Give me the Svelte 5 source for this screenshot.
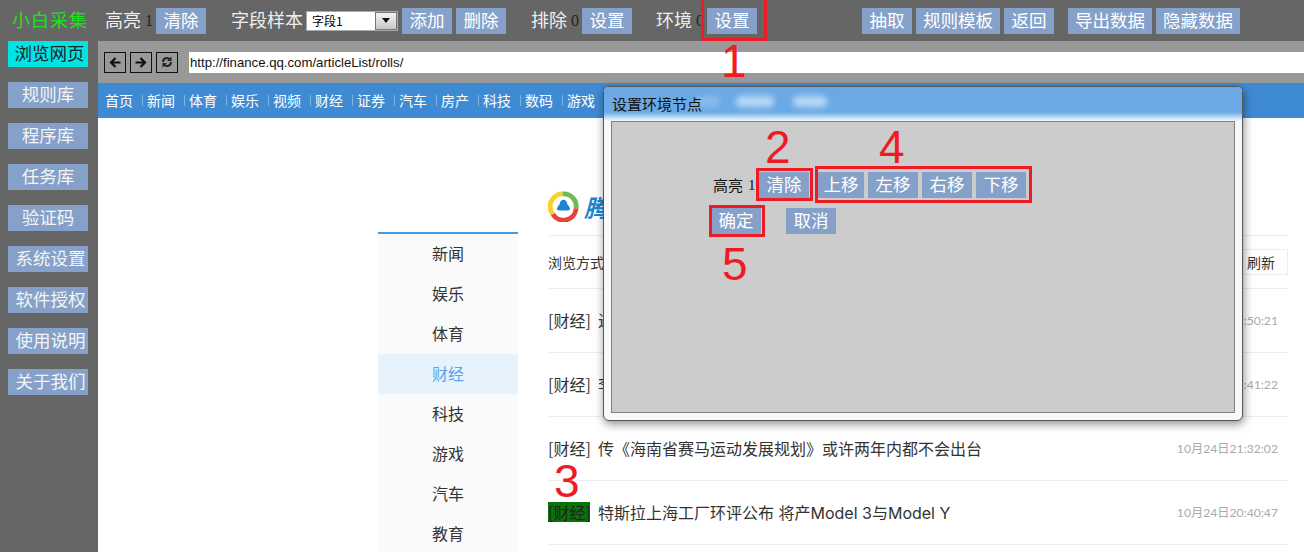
<script>
  const sideItems = ['浏览网页', '规则库', '程序库', '任务库', '验证码', '系统设置', '软件授权', '使用说明', '关于我们'];
  const navItems = ['首页', '新闻', '体育', '娱乐', '视频', '财经', '证券', '汽车', '房产', '科技', '数码', '游戏'];
  const channels = ['新闻', '娱乐', '体育', '财经', '科技', '游戏', '汽车', '教育'];
  const rows = [
    { title: '进', time: '10月24日21:50:21' },
    { title: '李', time: '10月24日21:41:22' },
    { title: '传《海南省赛马运动发展规划》或许两年内都不会出台', time: '10月24日21:32:02' },
    { title: '特斯拉上海工厂环评公布 将产Model 3与Model Y', time: '10月24日20:40:47', mark: true }
  ];
  const moves = ['上移', '左移', '右移', '下移'];
</script>

<div class="screen">
  <header class="topbar">
    <span class="brand">小白采集</span>
    <span class="label hl">高亮</span><span class="num">1</span>
    <button class="btn first">清除</button>
    <span class="label sample">字段样本</span>
    <div class="select"><span>字段1</span><i><b></b></i></div>
    <button class="btn">添加</button>
    <button class="btn">删除</button>
    <span class="label excl">排除</span><span class="num">0</span>
    <button class="btn">设置</button>
    <span class="label env">环境</span><span class="num">0</span>
    <button class="btn envset">设置</button>
    <button class="btn extract">抽取</button>
    <button class="btn wide">规则模板</button>
    <button class="btn">返回</button>
    <button class="btn wide export">导出数据</button>
    <button class="btn wide">隐藏数据</button>
  </header>

  <div class="main">
    <aside class="side">
      {#each sideItems as item, i}
        <button class="sidebtn" class:on={i === 0} class:four={item.length === 4}>{item}</button>
      {/each}
    </aside>

    <section class="browser">
      <div class="toolbar">
        <button class="nav" aria-label="back">
          <svg width="12" height="11" viewBox="0 0 12 11"><path d="M11.500 5.500H3M6.500 1 2 5.500 6.500 10" fill="none" stroke="#111" stroke-width="2.200"/></svg>
        </button>
        <button class="nav" aria-label="forward">
          <svg width="12" height="11" viewBox="0 0 12 11"><path d="M.5 5.500H9M5.500 1 10 5.500 5.500 10" fill="none" stroke="#111" stroke-width="2.200"/></svg>
        </button>
        <button class="nav" aria-label="refresh">
          <svg width="12" height="12" viewBox="0 0 12 12"><path d="M2 6a4 4 0 0 1 7-2.600M10 6a4 4 0 0 1-7 2.600" fill="none" stroke="#222" stroke-width="2"/><path d="M10.500.5V5H6ZM1.500 11.500V7H6Z" fill="#222"/></svg>
        </button>
        <div class="url">http://finance.qq.com/articleList/rolls/</div>
      </div>

      <nav class="sitenav">
        {#each navItems as item}
          <a href="#top">{item}</a>
        {/each}
      </nav>

      <div class="page">
        <ul class="channels">
          {#each channels as ch}
            <li class:cur={ch === '财经'}>{ch}</li>
          {/each}
        </ul>
        <div class="list">
          <div class="logo">
            <svg width="31" height="31" viewBox="0 0 32 32">
              <path d="M5 24A13 13 0 0 1 15 3" fill="none" stroke="#f5d327" stroke-width="5"/>
              <path d="M15 3A13 13 0 0 1 29 18" fill="none" stroke="#6fbb55" stroke-width="5"/>
              <path d="M29 18A13 13 0 0 1 5 24" fill="none" stroke="#e8413c" stroke-width="5"/>
              <circle cx="16" cy="16" r="9.500" fill="#fff"/>
              <path d="M16 9c2.500 0 4 2.500 4 5 2 1.500 3 3.500 2.500 5.500-3 1-10 1-13 0-.5-2 .5-4 2.500-5.500 0-2.500 1.500-5 4-5Z" fill="#1c85cf"/>
            </svg>
            <em>腾</em>
          </div>
          <div class="mode">
            <span>浏览方式</span>
            <span class="refresh">刷新</span>
          </div>
          {#each rows as row}
            <div class="row">
              <span class="tag" class:mark={row.mark}>[财经]</span>
              <span class="title">{row.title}</span>
              <span class="time">{row.time}</span>
            </div>
          {/each}
        </div>
      </div>
    </section>
  </div>

  <div class="dialog">
    <div class="dlg-title">
      <span class="blob b1"></span><span class="blob b2"></span><span class="blob b3"></span>
      <span class="dlg-text">设置环境节点</span>
    </div>
    <div class="dlg-body">
      <div class="dlg-line one">
        <span class="dlg-label">高亮</span><span class="dlg-num">1</span>
        <button class="btn dlg-clear">清除</button>
        <div class="moves">
          {#each moves as m, i}
            <button class="btn" class:narrow={i === 0}>{m}</button>
          {/each}
        </div>
      </div>
      <div class="dlg-line two">
        <button class="btn ok">确定</button>
        <button class="btn cancel">取消</button>
      </div>
    </div>
  </div>

  <!-- red annotations on top of the shot -->
  <div class="box b-env"></div>
  <div class="box b-clear"></div>
  <div class="box b-moves"></div>
  <div class="box b-ok"></div>
  <span class="step s1">1</span>
  <span class="step s2">2</span>
  <span class="step s3">3</span>
  <span class="step s4">4</span>
  <span class="step s5">5</span>
</div>

<style>
  :global(body) {
    margin: 0;
    background: #fff;
  }

  .screen {
    position: relative;
    width: 1304px;
    height: 552px;
    overflow: hidden;
    background: #666;
    font-family: "Noto Sans CJK SC", sans-serif;
  }

  button {
    border: 0;
    padding: 0;
    font-family: inherit;
  }

  .topbar {
    display: flex;
    align-items: center;
    height: 41px;
    padding-left: 12px;
    box-sizing: border-box;
    color: #eee;
    font-size: 18px;
  }

  .brand {
    width: 76px;
    margin-bottom: 3px;
    color: #1ee01e;
    font-size: 18px;
    letter-spacing: 1px;
    white-space: nowrap;
  }

  .label {
    margin-bottom: 3px;
    white-space: nowrap;
  }

  .hl { margin-left: 17px; }
  .sample { margin-left: 25px; width: 75px; }
  .excl { margin-left: 21px; }
  .env { margin-left: 20px; }

  .num {
    width: 15px;
    padding-left: 4px;
    box-sizing: border-box;
    color: #222;
    font-family: "Liberation Serif", serif;
    font-size: 16px;
  }

  .btn {
    flex: none;
    width: 50px;
    height: 26px;
    margin-right: 4px;
    padding-bottom: 2px;
    background: #85a1c9;
    color: #fff;
    font-size: 17.500px;
    line-height: 24px;
    white-space: nowrap;
  }

  .btn.wide { width: 84px; }
  .btn.narrow { width: 46px; }
  .first { margin-right: 0; }

  .select {
    display: flex;
    justify-content: space-between;
    width: 92px;
    height: 20px;
    margin-right: 4px;
    box-sizing: border-box;
    border: 1px solid #aaa;
    background: #fff;
    color: #000;
    font-size: 12px;
    line-height: 18px;
    padding-left: 5px;
  }

  .select i {
    display: flex;
    align-items: center;
    justify-content: center;
    width: 20px;
    border: 1px solid #777;
    background: linear-gradient(#f4f4f4, #c8c8c8);
  }

  .select b {
    border: 4px solid transparent;
    border-top: 5px solid #111;
    border-bottom: 0;
  }

  .envset { margin-right: 0; }
  .extract { margin-left: 105px; }
  .export { margin-left: 10px; }

  .main {
    display: flex;
    height: 511px;
  }

  .side {
    display: flex;
    flex-direction: column;
    gap: 15px;
    width: 98px;
    flex: none;
    padding-left: 8px;
    box-sizing: border-box;
  }

  .sidebtn {
    width: 80px;
    height: 26px;
    padding-bottom: 2px;
    background: #85a1c9;
    color: #f4f4f4;
    font-size: 17.500px;
    line-height: 24px;
    white-space: nowrap;
  }

  .sidebtn.four { padding-left: 5px; }
  .sidebtn.on { background: #00e4e4; color: #222; padding-left: 3px; }

  .browser {
    flex: 1;
    min-width: 0;
    background: #fff;
  }

  .toolbar {
    display: flex;
    align-items: center;
    gap: 4px;
    height: 42px;
    padding-left: 6px;
    box-sizing: border-box;
    background: #999;
  }

  .nav {
    display: flex;
    align-items: center;
    justify-content: center;
    width: 22px;
    height: 21px;
    box-sizing: border-box;
    border: 1px solid #111;
    background: #999;
  }

  .url {
    flex: 1;
    height: 21px;
    margin-left: 7px;
    padding-left: 1px;
    box-sizing: border-box;
    background: #fff;
    color: #111;
    font-family: "Liberation Sans", sans-serif;
    font-size: 13.200px;
    line-height: 21px;
  }

  .sitenav {
    display: flex;
    height: 35px;
    padding-left: 7px;
    align-items: center;
    background: #3e8bd4;
  }

  .sitenav a {
    width: 41px;
    margin-right: 1px;
    color: #fff;
    font-size: 14px;
    line-height: 15px;
    text-decoration: none;
    position: relative;
  }

  .sitenav a:not(:last-child)::after {
    content: '';
    position: absolute;
    right: 3px;
    top: 2px;
    height: 11px;
    border-right: 1px solid #7db2e4;
  }

  .page {
    display: flex;
    height: 434px;
    overflow: hidden;
    background: #fff;
    padding-left: 280px;
  }

  .channels {
    flex: none;
    width: 140px;
    height: 320px;
    margin: 114px 30px 0 0;
    padding: 0;
    border-top: 2px solid #3d9be9;
    list-style: none;
    background: #fafafa;
  }

  .channels li {
    height: 40px;
    color: #333;
    font-size: 16px;
    line-height: 38px;
    text-align: center;
  }

  .channels li.cur {
    background: #e6f2fc;
    color: #5aa5ee;
  }

  .list {
    width: 740px;
    flex: none;
  }

  .logo {
    display: flex;
    align-items: center;
    gap: 5px;
    height: 118px;
    box-sizing: border-box;
    padding-top: 60px;
    border-bottom: 1px solid #eee;
  }

  .logo em {
    color: #1c85cf;
    font-size: 24px;
    font-weight: 700;
  }

  .mode {
    display: flex;
    align-items: center;
    justify-content: space-between;
    height: 53px;
    border-bottom: 1px solid #eee;
    color: #333;
    font-size: 14px;
    box-sizing: border-box;
  }

  .refresh {
    width: 54px;
    height: 26px;
    box-sizing: border-box;
    border: 1px solid #eee;
    line-height: 24px;
    text-align: center;
  }

  .row {
    display: flex;
    align-items: center;
    height: 64px;
    padding-bottom: 2px;
    box-sizing: border-box;
    border-bottom: 1px solid #eee;
    color: #333;
    font-size: 16px;
  }

  .tag {
    width: 42px;
    margin-right: 8px;
    line-height: 20px;
    white-space: nowrap;
  }

  .tag.mark { background: #067406; color: #222; }

  .title {
    flex: 1;
    font-family: "Inter", "Noto Sans CJK SC", sans-serif;
    font-size: 16px;
  }

  .time {
    margin-right: 10px;
    color: #aaa;
    font-family: "Lato", "Noto Sans CJK SC", sans-serif;
    font-size: 12.200px;
  }

  .dialog {
    position: absolute;
    left: 603px;
    top: 86px;
    width: 640px;
    height: 335px;
    box-sizing: border-box;
    border: 1px solid #555;
    border-radius: 6px;
    background: #f7f9fb;
    box-shadow: 1px 3px 10px rgba(0, 0, 0, 0.45);
    overflow: hidden;
  }

  .dlg-title {
    position: relative;
    height: 34px;
    background: linear-gradient(#6aa9e3, #6aaae6 74%, #f7f9fb);
    color: #111;
    font-size: 15px;
    line-height: 34px;
    padding-left: 8px;
  }

  .dlg-text { position: relative; }

  .blob {
    position: absolute;
    top: 9px;
    height: 11px;
    border-radius: 5px;
    background: rgba(205, 230, 250, 0.8);
    filter: blur(3px);
  }

  .b1 { left: 92px; width: 24px; opacity: 0.4; }
  .b2 { left: 132px; width: 38px; }
  .b3 { left: 189px; width: 34px; }

  .dlg-body {
    width: 624px;
    height: 292px;
    box-sizing: border-box;
    margin-left: 7px;
    border: 1px solid #808080;
    background: #ccc;
    padding: 50px 0 0 101px;
  }

  .dlg-line {
    display: flex;
    align-items: center;
  }

  .one { height: 26px; }
  .two { height: 26px; margin-top: 10px; }

  .dlg-label {
    margin-bottom: 2px;
    color: #111;
    font-size: 15px;
    white-space: nowrap;
  }

  .dlg-num {
    width: 16px;
    padding-left: 5px;
    box-sizing: border-box;
    color: #111;
    font-family: "Liberation Serif", serif;
    font-size: 15px;
  }

  .dlg-clear { margin-right: 9px; }

  .moves { display: flex; }

  .ok { margin-left: -2px; margin-right: 25px; }

  .box {
    position: absolute;
    box-sizing: border-box;
    border: 3px solid #ed1c24;
  }

  .b-env { left: 701px; top: -3px; width: 66px; height: 44px; }
  .b-clear { left: 756px; top: 168px; width: 57px; height: 33px; }
  .b-moves { left: 815px; top: 166px; width: 217px; height: 37px; }
  .b-ok { left: 709px; top: 205px; width: 56px; height: 32px; }

  .step {
    position: absolute;
    color: #ed1c24;
    font-family: "Liberation Sans", sans-serif;
    font-size: 46px;
    line-height: 36px;
  }

  .s1 { left: 721px; top: 43px; }
  .s2 { left: 765px; top: 129px; }
  .s3 { left: 554px; top: 463px; }
  .s4 { left: 879px; top: 129px; }
  .s5 { left: 722px; top: 246px; }
</style>
